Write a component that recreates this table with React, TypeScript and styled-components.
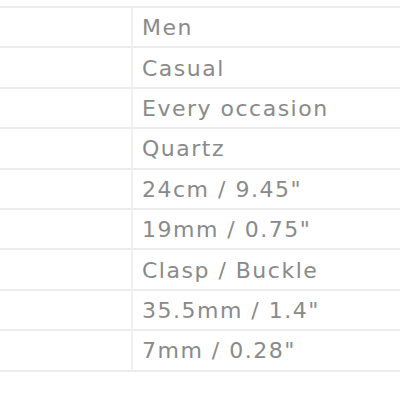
import React from "react";
import styled, { createGlobalStyle } from "styled-components";

const Global = createGlobalStyle`
  html, body { margin: 0; padding: 0; background: #ffffff; }
  body { font-family: "DejaVu Sans", "Liberation Sans", sans-serif; }
`;

const Page = styled.div`
  width: 400px;
  height: 400px;
  padding-top: 6px;
  box-sizing: border-box;
  background: #ffffff;
  overflow: hidden;
`;

const Table = styled.div`
  display: flex;
  flex-direction: column;
  border-top: 2px solid #ececec;
`;

const Row = styled.div`
  display: grid;
  grid-template-columns: 133px 1fr;
  height: 40.4px;
  box-sizing: border-box;
  border-bottom: 2px solid #ececec;
`;

const LabelCell = styled.div`
  border-right: 2px solid #f0f0f0;
`;

const ValueCell = styled.div`
  display: flex;
  align-items: center;
  padding: 1px 0 0 9px;
  font-size: 22px;
  letter-spacing: 1.5px;
  color: #8a8a8a;
  white-space: nowrap;
`;

const values = [
  "Men",
  "Casual",
  "Every occasion",
  "Quartz",
  "24cm / 9.45\"",
  "19mm / 0.75\"",
  "Clasp / Buckle",
  "35.5mm / 1.4\"",
  "7mm / 0.28\"",
];

export default function App() {
  return (
    <>
      <Global />
      <Page>
        <Table>
          {values.map((v) => (
            <Row key={v}>
              <LabelCell />
              <ValueCell>{v}</ValueCell>
            </Row>
          ))}
        </Table>
      </Page>
    </>
  );
}
